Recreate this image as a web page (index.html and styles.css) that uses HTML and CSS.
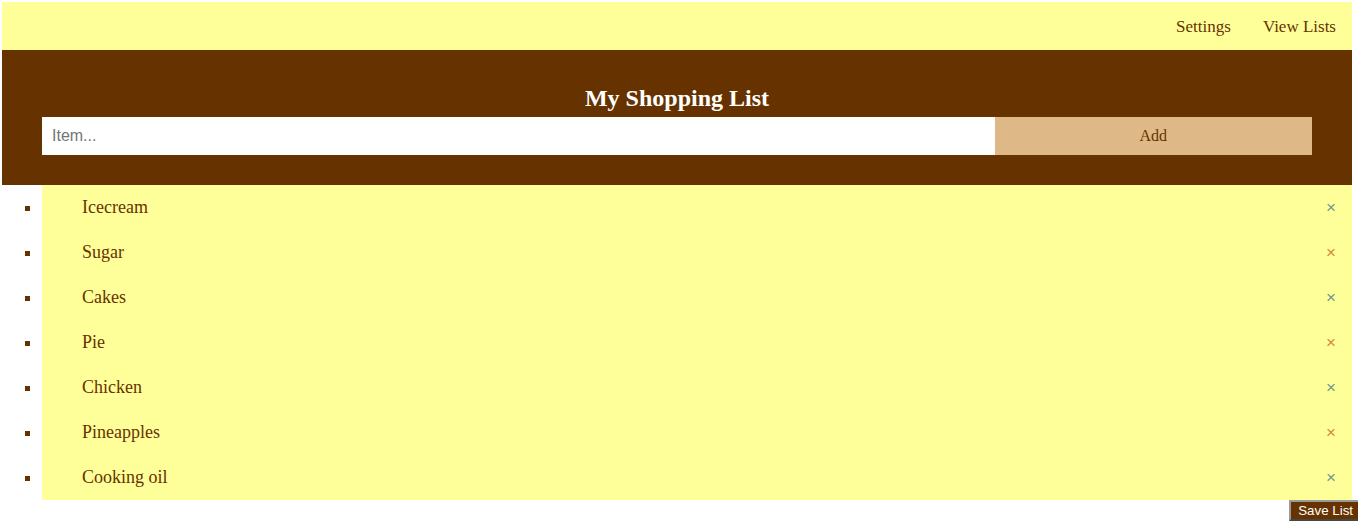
FILE: index.html
```html
<!DOCTYPE html>
<html>
<head>
<meta charset="utf-8">
<link rel="stylesheet" href="styles.css">
</head>
<body>
<div class="page">
  <nav class="topbar">
    <a class="navlink" href="#">Settings</a>
    <a class="navlink" href="#">View Lists</a>
  </nav>
  <header class="header">
    <h2 class="title">My Shopping List</h2>
    <div class="addrow">
      <input class="item-input" type="text" placeholder="Item...">
      <button class="add-btn">Add</button>
    </div>
  </header>
  <ul class="list">
    <li class="item"><span class="name">Icecream</span><span class="close">×</span></li>
    <li class="item"><span class="name">Sugar</span><span class="close">×</span></li>
    <li class="item"><span class="name">Cakes</span><span class="close">×</span></li>
    <li class="item"><span class="name">Pie</span><span class="close">×</span></li>
    <li class="item"><span class="name">Chicken</span><span class="close">×</span></li>
    <li class="item"><span class="name">Pineapples</span><span class="close">×</span></li>
    <li class="item"><span class="name">Cooking oil</span><span class="close">×</span></li>
  </ul>
</div>
<div class="save-row">
  <button class="save-btn">Save List</button>
</div>
</body>
</html>
```

FILE: styles.css
```css
html, body {
  background: #ffffff;
}
body {
  margin: 2px;
  font-family: "Liberation Serif", "Times New Roman", serif;
  color: #663300;
}
.page {
  width: 1350px;
}
.topbar {
  height: 48px;
  background: #ffff99;
  display: flex;
  justify-content: flex-end;
  align-items: center;
}
.navlink {
  padding: 0 16px;
  font-size: 17px;
  color: #663300;
  text-decoration: none;
  line-height: 19px;
}
.header {
  background: #663300;
  padding: 30px 40px;
}
.title {
  margin: 5px 0;
  font-size: 24px;
  line-height: 27px;
  font-weight: bold;
  color: #ffffff;
  text-align: center;
}
.addrow {
  display: flex;
}
.item-input {
  box-sizing: border-box;
  width: 75%;
  height: 38px;
  margin: 0;
  border: none;
  border-radius: 0;
  padding: 10px;
  font-family: "Liberation Sans", Arial, sans-serif;
  font-size: 16px;
  color: #333;
  background: #ffffff;
  outline: none;
}
.item-input::placeholder {
  color: #757575;
}
.add-btn {
  box-sizing: border-box;
  width: 25%;
  height: 38px;
  margin: 0;
  border: none;
  border-radius: 0;
  padding: 10px;
  background: #deb887;
  color: #663300;
  font-family: "Liberation Serif", "Times New Roman", serif;
  font-size: 16px;
}
.list {
  margin: 0;
  padding: 0 0 0 40px;
  list-style: square;
}
.item {
  position: relative;
  background: #ffff99;
  padding: 12px 8px 12px 40px;
  font-size: 18px;
  line-height: 21px;
  color: #663300;
}
.close {
  position: absolute;
  right: 0;
  top: 0;
  padding: 12px 16px 12px 16px;
  font-family: "Liberation Sans", Arial, sans-serif;
  font-size: 17px;
  line-height: 22px;
  color: #6f9a8c;
}
.item:nth-child(even) .close {
  color: #d28a3c;
}
.save-row {
  display: flex;
  justify-content: flex-end;
  margin-right: -4px;
  margin-top: 0;
}
.save-btn {
  background: #663300;
  color: #ffffff;
  font-family: "Liberation Sans", Arial, sans-serif;
  font-size: 13.333px;
  line-height: 15px;
  padding: 1px 7px;
  border: 2px outset #9a9a9a;
  margin: 0;
}
```
